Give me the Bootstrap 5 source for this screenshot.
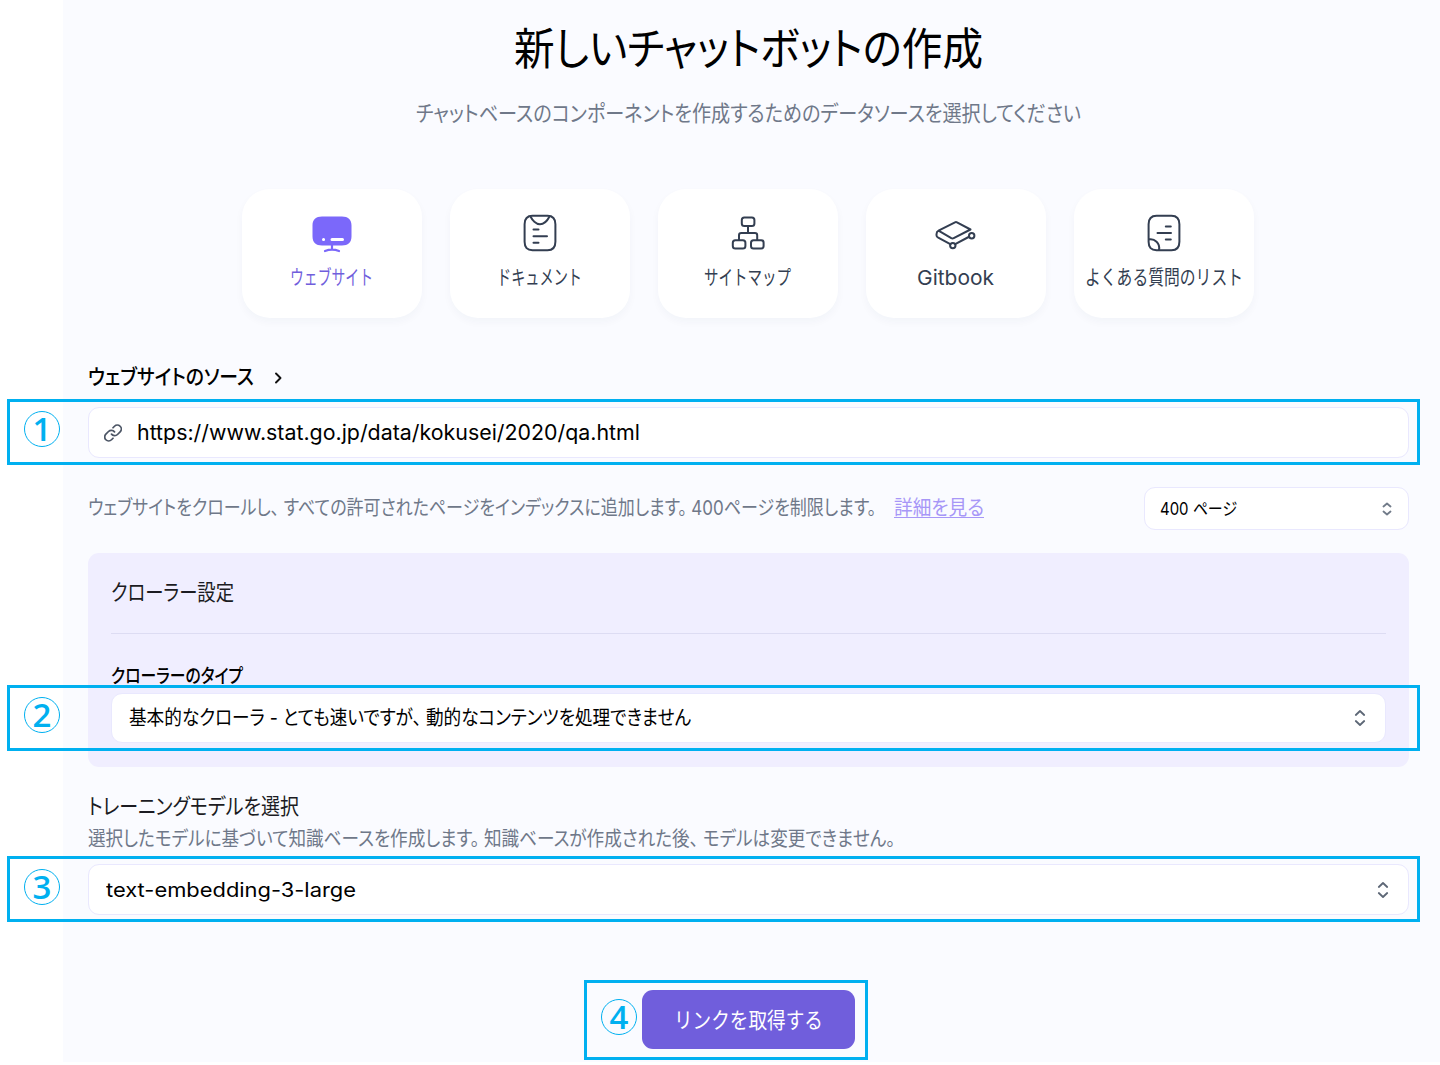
<!DOCTYPE html>
<html lang="ja">
<head>
<meta charset="utf-8">
<meta name="viewport" content="width=device-width, initial-scale=1">
<title>新しいチャットボットの作成</title>
<link href="https://cdn.jsdelivr.net/npm/bootstrap@5.3.0/dist/css/bootstrap.min.css" rel="stylesheet">
<style>
  body { font-family: Inter, "Noto Sans CJK JP", sans-serif; font-feature-settings: "palt"; color: #0b0b0f; background: #fff; overflow: hidden; }
  .builder { margin-left: 63px; height: 1062px; padding: 19px 31px 0 25px; background: #fafbff; }
  .fit { display: inline-block; white-space: nowrap; transform-origin: 0 50%; }
  .stop { margin-right: .26em; }
  .page-title { font-size: 44.5px; line-height: 60px; font-weight: 400; color: #000; }
  .page-sub { font-size: 21.5px; line-height: 30px; color: #6f7889; margin: 19px 0 61px; }
  .source-tabs { gap: 28px; height: 129px; margin-right: 2px; }
  .source-tab { width: 180px; height: 129px; border: 0; border-radius: 28px; background: #fff; color: #333e51; box-shadow: 0 4px 8px rgba(40,50,90,.035); padding: 23px 0 0; font-size: 20.5px; line-height: 28px; }
  .source-tab svg { width: 44px; height: 42px; margin-bottom: 10px; flex: none; fill: none; stroke: #333e51; stroke-width: 2; stroke-linecap: round; stroke-linejoin: round; }
  .source-tab.active { color: #705edc; }
  .source-heading { margin-top: 44px; height: 30px; line-height: 30px; font-size: 21px; font-weight: 500; color: #000; }
  .field { height: 51px; border: 1px solid #e9e8fe; border-radius: 11px; background: #fff; color: #000; font-size: 20px; line-height: 28px; }
  .field-url { margin-top: 15px; padding: 0 15px; font-size: 21px; }
  .field-model { margin-top: 9px; padding: 0 18px 0 17px; }
  .field-crawler { height: 50px; margin-top: 2px; padding: 0 18px 0 17px; }
  .field-pages { width: 265px; height: 43px; padding: 0 15px; font-size: 17.5px; }
  .limits { height: 43px; margin-top: 29px; font-size: 20px; color: #6f7889; }
  .limits .note { position: relative; top: -1px; }
  .limits a { color: #a797f7; margin-left: 18px; text-decoration: underline; text-decoration-thickness: 1px; text-underline-offset: 2px; }
  .crawler { margin-top: 23px; height: 214px; border-radius: 11px; background: #f0eeff; padding: 23px 23px 0; }
  .crawler-title { height: 32px; line-height: 32px; font-size: 22px; color: #1b1b22; }
  .crawler-line { height: 1px; margin: 25px 0 0; background: #dddcf3; }
  .crawler-label { margin-top: 27px; height: 30px; line-height: 30px; font-size: 19.5px; font-weight: 500; color: #000; }
  .model-title { margin-top: 23px; height: 32px; line-height: 32px; font-size: 22px; color: #1b1b22; }
  .model-desc { margin-top: 2px; height: 31px; line-height: 31px; font-size: 20px; color: #6f7889; }
  .submit-row { margin-top: 75px; }
  .btn-links { width: 213px; height: 59px; border: 0; border-radius: 11px; background: #705edc; color: #fff; font-size: 22px; line-height: 32px; padding: 0; }
  .btn-links:hover { background: #705edc; color: #fff; }
  .callout { position: absolute; border: 3px solid #00b0f0; pointer-events: none; }
  .callout-wide { left: -82px; right: -12px; top: -9px; height: 66px; }
  .callout-inner { left: -105px; right: -35px; }
  .callout-submit { left: -58px; top: -10px; width: 284px; height: 80px; }
  .step-no { position: absolute; left: 14px; top: 9px; width: 36px; height: 36px; border: 1px solid #00b0f0; border-radius: 50%; color: #00b0f0; font: 600 33px/33px "Open Sans", "Noto Sans", sans-serif; text-align: center; }
  .field-model .step-no { top: 10px; }
  .callout-submit .step-no { left: 14px; top: 16px; }
  .updown { fill: none; stroke: #5d6776; stroke-width: 1.8; stroke-linecap: round; stroke-linejoin: round; }
</style>
<script src="https://cdn.jsdelivr.net/npm/bootstrap@5.3.0/dist/js/bootstrap.bundle.min.js"></script>
</head>
<body>
<main class="builder">
  <header class="text-center">
    <h1 class="page-title mb-0"><span class="fit" data-fit="469">新しいチャットボットの作成</span></h1>
    <p class="page-sub"><span class="fit" data-fit="665">チャットベースのコンポーネントを作成するためのデータソースを選択してください</span></p>
  </header>

  <nav class="source-tabs d-flex justify-content-center">
    <button class="source-tab active d-flex flex-column align-items-center">
      <svg viewBox="0 0 44 42"><path d="M12 4.600h20c6 0 9.500 3 9.500 8.800v11c0 6-3.500 9-9.500 9H12c-6 0-9.500-3-9.500-9v-11c0-5.800 3.500-8.800 9.500-8.800Z" fill="#7b68fa" stroke="none"/><path d="M22 33v4.500M15 39c4.500-1.700 9.500-1.700 14 0" stroke="#7b68fa" stroke-width="2.200"/><path d="M13.500 27.600h.1M22 27.600h10.500" stroke="#fff" stroke-width="3"/></svg>
      <span class="fit" data-fit="83">ウェブサイト</span>
    </button>
    <button class="source-tab d-flex flex-column align-items-center">
      <svg viewBox="0 0 44 42"><path d="M14.500 3.700h15c5.300 0 7.900 3 7.900 8.500v17.500c0 5.700-2.600 8.500-7.900 8.500h-15c-5.300 0-7.900-2.800-7.900-8.500V12.200c0-5.500 2.600-8.500 7.900-8.500ZM12.500 4.500c1.700 3.500 5.500 7.700 9.500 7.700s7.700-4.200 9.500-7.700M15.500 17.600h5M15.500 24.300h13.500M15.500 30.700h5"/></svg>
      <span class="fit" data-fit="85">ドキュメント</span>
    </button>
    <button class="source-tab d-flex flex-column align-items-center">
      <svg viewBox="0 0 44 42"><rect x="15.800" y="5.500" width="12.600" height="8.400" rx="2.500"/><rect x="6.800" y="28.200" width="12.600" height="8.200" rx="2.500"/><rect x="25" y="28.200" width="12.600" height="8.200" rx="2.500"/><path d="M22 14v7M13 28v-4.700q0-2.300 2.300-2.300h13.600q2.300 0 2.300 2.300V28"/></svg>
      <span class="fit" data-fit="87">サイトマップ</span>
    </button>
    <button class="source-tab d-flex flex-column align-items-center">
      <svg viewBox="0 0 44 42"><path d="M4.500 18.700 21 10.300q1-.5 2 0L36.500 17.500 19.700 26.200q-1.200.6-2.400 0L4.500 18.700q-2 1-2 3.500v1q0 1.700 1.700 2.500L16.300 32.200M21.200 32.200 34.600 25"/><circle cx="18.800" cy="33.600" r="2.700"/><circle cx="37.700" cy="23.700" r="2.700"/></svg>
      <span class="fit" data-fit="77">Gitbook</span>
    </button>
    <button class="source-tab d-flex flex-column align-items-center">
      <svg viewBox="0 0 44 42"><path d="M14.500 3.700h15c5.300 0 7.900 3 7.900 8.500v17.500c0 5.700-2.600 8.500-7.900 8.500h-15c-5.300 0-7.900-2.800-7.900-8.500V12.200c0-5.500 2.600-8.500 7.900-8.500ZM6.800 27.500c5.800-1.200 11.500 3.800 10.200 10.500M23.800 14.600h5M15.500 21h13.500M23.800 27.600h5"/></svg>
      <span class="fit" data-fit="158">よくある質問のリスト</span>
    </button>
  </nav>

  <div class="source-heading d-flex align-items-center">
    <span class="fit" data-fit="166">ウェブサイトのソース</span>
    <svg class="ms-3" width="16" height="18" fill="none" stroke="#111" stroke-width="1.900" stroke-linecap="round" stroke-linejoin="round"><path d="M6 5.500 10.500 10 6 14.500"/></svg>
  </div>

  <div class="field field-url position-relative d-flex align-items-center">
    <svg width="18" height="18" viewBox="0 0 24 24" fill="none" stroke="#4c5565" stroke-width="2.300" stroke-linecap="round" stroke-linejoin="round"><path d="M10 13.500a5.300 5.300 0 0 0 8 .5l3.500-3.500a5.300 5.300 0 0 0-7.500-7.500L12 5M14 10.500a5.300 5.300 0 0 0-8-.5l-3.500 3.500a5.300 5.300 0 0 0 7.500 7.500l2-2"/></svg>
    <span class="fit" style="margin-left:15px" data-fit="503">https://www.stat.go.jp/data/kokusei/2020/qa.html</span>
    <div class="callout callout-wide"><span class="step-no">1</span></div>
  </div>

  <div class="limits d-flex align-items-center justify-content-between">
    <div class="note d-flex align-items-center">
      <span class="fit" data-fit="788">ウェブサイトをクロールし<span class="stop">、</span>すべての許可されたページをインデックスに追加します<span class="stop">。</span>400ページを制限します。</span>
      <a href="#" class="fit" data-fit="90">詳細を見る</a>
    </div>
    <div class="field field-pages d-flex align-items-center justify-content-between">
      <span class="fit" data-fit="77">400 ページ</span>
      <svg class="updown" width="12" height="16" viewBox="0 0 12 16"><path d="m2.500 5.500 3.500-3 3.500 3M2.500 10.500l3.500 3 3.500-3" stroke="#717b89"/></svg>
    </div>
  </div>

  <section class="crawler">
    <div class="crawler-title"><span class="fit" data-fit="123">クローラー設定</span></div>
    <div class="crawler-line"></div>
    <div class="crawler-label"><span class="fit" data-fit="132">クローラーのタイプ</span></div>
    <div class="field field-crawler position-relative d-flex align-items-center justify-content-between">
      <span class="fit" data-fit="562">基本的なクローラ - とても速いですが<span class="stop">、</span>動的なコンテンツを処理できません</span>
      <svg class="updown" width="14" height="18" viewBox="0 0 14 18"><path d="m2.800 6 4.200-4L11.200 6M2.800 12l4.200 4 4.200-4"/></svg>
      <div class="callout callout-wide callout-inner"><span class="step-no">2</span></div>
    </div>
  </section>

  <section>
    <div class="model-title"><span class="fit" data-fit="211">トレーニングモデルを選択</span></div>
    <div class="model-desc"><span class="fit" data-fit="807">選択したモデルに基づいて知識ベースを作成します<span class="stop">。</span>知識ベースが作成された後<span class="stop">、</span>モデルは変更できません。</span></div>
    <div class="field field-model position-relative d-flex align-items-center justify-content-between">
      <span class="fit" data-fit="250">text-embedding-3-large</span>
      <svg class="updown" width="14" height="18" viewBox="0 0 14 18"><path d="m2.800 6 4.200-4L11.200 6M2.800 12l4.200 4 4.200-4"/></svg>
      <div class="callout callout-wide"><span class="step-no">3</span></div>
    </div>
  </section>

  <div class="submit-row d-flex justify-content-center">
    <div class="position-relative">
      <button class="btn btn-links"><span class="fit" data-fit="149">リンクを取得する</span></button>
      <div class="callout callout-submit"><span class="step-no">4</span></div>
    </div>
  </div>
</main>
<script>
  // Condense each label to its designed width and keep the layout box in step.
  document.querySelectorAll('.fit').forEach(function (el) {
    var natural = el.getBoundingClientRect().width;
    var wanted = Number(el.dataset.fit);
    el.style.transform = 'scaleX(' + wanted / natural + ')';
    el.style.marginRight = (wanted - natural) + 'px';
  });
</script>
</body>
</html>
